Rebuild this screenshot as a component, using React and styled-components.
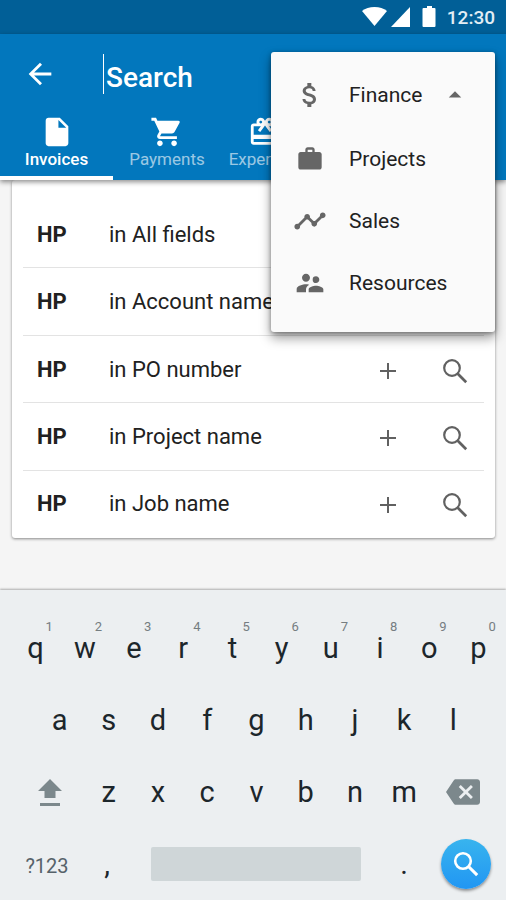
import React from "react";
import styled, { createGlobalStyle, css } from "styled-components";
import {
  MdArrowBack,
  MdArrowDropUp,
  MdAttachMoney,
  MdBackspace,
  MdCardGiftcard,
  MdInsertDriveFile,
  MdShoppingCart,
  MdSupervisorAccount,
  MdTimeline,
  MdWork,
} from "react-icons/md";

const GlobalStyle = createGlobalStyle`
  *, *::before, *::after { box-sizing: border-box; }
  body {
    margin: 0;
    background: #f5f5f5;
    font-family: Roboto, "Liberation Sans", sans-serif;
  }
  button, input { font: inherit; }
  svg { display: block; flex: none; }
`;

const plainButton = css`
  display: flex;
  align-items: center;
  justify-content: center;
  margin: 0;
  padding: 0;
  border: 0;
  background: none;
  color: inherit;
  cursor: pointer;
`;

const Screen = styled.div`
  position: relative;
  display: flex;
  flex-direction: column;
  min-height: 100vh;
  overflow: hidden;
`;

const StatusBar = styled.div`
  display: flex;
  align-items: center;
  justify-content: flex-end;
  height: 34px;
  padding-right: 11px;
  background: #015f97;
  color: #fff;
`;

const Clock = styled.time`
  margin-left: 11px;
  font-size: 19px;
  font-weight: 500;
  color: #e3eef5;
`;

const Header = styled.header`
  position: relative;
  z-index: 1;
  background: #0277bd;
  color: #fff;
  box-shadow: 0 2px 5px rgba(0, 0, 0, 0.45);
`;

const Toolbar = styled.div`
  display: flex;
  align-items: center;
  height: 80px;
  padding-left: 24px;
`;

const BackButton = styled.button`
  ${plainButton}
  width: 32px;
  height: 32px;
`;

const SearchField = styled.input`
  flex: 1;
  min-width: 0;
  height: 40px;
  margin-left: 47px;
  padding: 6px 0 0 2px;
  border: 0;
  border-left: 1px solid #fff;
  outline: 0;
  background: none;
  color: #fff;
  font-size: 28px;
  font-weight: 500;
  &::placeholder {
    color: #fff;
    opacity: 1;
  }
`;

const Tabs = styled.div`
  display: flex;
  height: 66px;
`;

const Tab = styled.button`
  ${plainButton}
  flex: none;
  flex-direction: column;
  justify-content: flex-start;
  width: ${(p) => p.$width}px;
  padding-top: 1px;
  border-bottom: 4px solid ${(p) => (p.$active ? "#fff" : "transparent")};
  font-size: 17px;
  font-weight: ${(p) => (p.$active ? 500 : 400)};
  line-height: 20px;
`;

const TabLabel = styled.span`
  opacity: ${(p) => (p.$active ? 1 : 0.6)};
`;

const Menu = styled.nav`
  position: absolute;
  z-index: 2;
  top: 52px;
  right: 11px;
  width: 224px;
  padding: 10px 0 18px;
  border-radius: 3px;
  background: #fafafa;
  box-shadow: 0 6px 12px rgba(0, 0, 0, 0.4), 0 1px 4px rgba(0, 0, 0, 0.35);
`;

const MenuItem = styled.button`
  ${plainButton}
  justify-content: flex-start;
  width: 100%;
  height: ${(p) => (p.$open ? 66 : 62)}px;
  padding-right: 25px;
  font-size: 21px;
  color: #212121;
  svg { color: #666; }
`;

const MenuIcon = styled.span`
  display: flex;
  justify-content: center;
  width: 78px;
`;

const MenuLabel = styled.span`
  flex: 1;
  text-align: left;
`;

const Results = styled.ul`
  display: flex;
  flex: 1;
  flex-direction: column;
  margin: 0 11px 52px 12px;
  padding: 21px 11px 0;
  border-radius: 3px;
  background: #fff;
  list-style: none;
  box-shadow: 0 1px 3px rgba(0, 0, 0, 0.45);
`;

const ResultRow = styled.li`
  display: flex;
  flex: 1;
  align-items: center;
  min-height: 56px;
  padding-left: 14px;
  border-bottom: 1px solid #e3e3e3;
  font-size: 22px;
  color: #212121;
  &:last-child { border-bottom-color: transparent; }
`;

const Query = styled.strong`
  width: 72px;
  font-weight: 700;
`;

const Scope = styled.span`
  flex: 1;
  white-space: nowrap;
`;

const RowAction = styled.button`
  ${plainButton}
  width: 76px;
  height: 48px;
  padding-top: 3px;
  color: #616161;
  &:last-child { width: 58px; }
`;

const Keyboard = styled.section`
  padding-top: 22px;
  background: #eceff1;
  color: #1c262b;
  box-shadow: 0 -1px 2px rgba(0, 0, 0, 0.3);
`;

const KeyRow = styled.div`
  display: flex;
  align-items: center;
  height: 72px;
  padding: 0 ${(p) => p.$right}px 0 ${(p) => p.$left}px;
`;

const Key = styled.button`
  ${plainButton}
  position: relative;
  flex: 1 1 0;
  min-width: 0;
  height: 56px;
  font-size: 29px;
`;

const KeyHint = styled.span`
  position: absolute;
  top: 0;
  left: calc(50% + 10px);
  font-size: 13px;
  line-height: 14px;
  color: #757d81;
`;

const ActionKey = styled.button`
  ${plainButton}
  flex: none;
  width: 69px;
  height: 56px;
  color: #7c888c;
`;

const SpaceKey = styled.button`
  ${plainButton}
  flex: 1;
  height: 34px;
  margin: 0 6px 0 20px;
  border-radius: 2px;
  background: #cfd6d8;
`;

const SideKey = styled(Key)`
  flex: none;
  width: ${(p) => p.$width}px;
`;

const SymbolsKey = styled(SideKey)`
  padding-top: 4px;
  font-size: 20px;
  color: #56626a;
`;

const SearchKey = styled.button`
  ${plainButton}
  width: 50px;
  height: 50px;
  border-radius: 50%;
  background: linear-gradient(#38b4ee, #2196f3);
  color: #fff;
  box-shadow: 0 2px 3px rgba(0, 0, 0, 0.4);
`;

const tabs = [
  { label: "Invoices", icon: MdInsertDriveFile, width: 113, active: true },
  { label: "Payments", icon: MdShoppingCart, width: 108 },
  { label: "Expenses", icon: MdCardGiftcard, width: 88 },
];

const menuItems = [
  { label: "Finance", icon: MdAttachMoney, size: 32, open: true },
  { label: "Projects", icon: MdWork, size: 28 },
  { label: "Sales", icon: MdTimeline, size: 34 },
  { label: "Resources", icon: MdSupervisorAccount, size: 32 },
];

const scopes = ["All fields", "Account name", "PO number", "Project name", "Job name"];

function StatusIcons() {
  return (
    <svg width="74" height="22" viewBox="0 0 74 22" fill="currentColor" aria-hidden="true">
      <path d="M0 5Q5 1 12.500 1T25 5L12.500 20z" />
      <path d="M48 1v20H29z" />
      <path d="M63 2h2V0h5v2h2.500q1 0 1 1v17q0 1-1 1H61.500q-1 0-1-1V3q0-1 1-1z" />
    </svg>
  );
}

function PlusIcon() {
  return (
    <svg width="18" height="18" viewBox="0 0 18 18" stroke="currentColor" strokeWidth="2" aria-hidden="true">
      <path d="M9 1v16M1 9h16" />
    </svg>
  );
}

function SearchIcon({ weight = 2.2 }) {
  return (
    <svg width="26" height="26" viewBox="0 0 26 26" fill="none" stroke="currentColor" strokeWidth={weight} aria-hidden="true">
      <circle cx="10" cy="10" r="7.800" />
      <path d="M15.500 15.500L24.200 24.200" strokeWidth={weight + 0.5} />
    </svg>
  );
}

function ShiftIcon() {
  return (
    <svg width="26" height="30" viewBox="0 0 26 30" fill="currentColor" aria-hidden="true">
      <path d="M13 2L1 14h6.500v7h11v-7H25zM3 26h20v3H3z" />
    </svg>
  );
}

export default function App() {
  return (
    <>
      <GlobalStyle />
      <Screen>
        <StatusBar>
          <StatusIcons />
          <Clock>12:30</Clock>
        </StatusBar>

        <Header>
          <Toolbar>
            <BackButton aria-label="Back">
              <MdArrowBack size={34} />
            </BackButton>
            <SearchField type="text" placeholder="Search" aria-label="Search" />
          </Toolbar>
          <Tabs role="tablist">
            {tabs.map(({ label, icon: Icon, width, active }) => (
              <Tab key={label} role="tab" aria-selected={!!active} $width={width} $active={active}>
                <Icon size={34} />
                <TabLabel $active={active}>{label}</TabLabel>
              </Tab>
            ))}
          </Tabs>
        </Header>

        <Menu aria-label="Sections">
          {menuItems.map(({ label, icon: Icon, size, open }) => (
            <MenuItem key={label} $open={open}>
              <MenuIcon>
                <Icon size={size} />
              </MenuIcon>
              <MenuLabel>{label}</MenuLabel>
              {open && <MdArrowDropUp size={30} />}
            </MenuItem>
          ))}
        </Menu>

        <Results>
          {scopes.map((scope) => (
            <ResultRow key={scope}>
              <Query>HP</Query>
              <Scope>in {scope}</Scope>
              <RowAction aria-label={`Add ${scope}`}>
                <PlusIcon />
              </RowAction>
              <RowAction aria-label={`Search ${scope}`}>
                <SearchIcon />
              </RowAction>
            </ResultRow>
          ))}
        </Results>

        <Keyboard aria-label="Keyboard">
          <KeyRow $left={11} $right={3}>
            {[..."qwertyuiop"].map((letter, i) => (
              <Key key={letter}>
                {letter}
                <KeyHint>{(i + 1) % 10}</KeyHint>
              </Key>
            ))}
          </KeyRow>
          <KeyRow $left={35} $right={28}>
            {[..."asdfghjkl"].map((letter) => (
              <Key key={letter}>{letter}</Key>
            ))}
          </KeyRow>
          <KeyRow $left={15} $right={8}>
            <ActionKey aria-label="Shift">
              <ShiftIcon />
            </ActionKey>
            {[..."zxcvbnm"].map((letter) => (
              <Key key={letter}>{letter}</Key>
            ))}
            <ActionKey aria-label="Backspace">
              <MdBackspace size={34} />
            </ActionKey>
          </KeyRow>
          <KeyRow $left={11} $right={15}>
            <SymbolsKey $width={72}>?123</SymbolsKey>
            <SideKey $width={48}>,</SideKey>
            <SpaceKey aria-label="Space" />
            <SideKey $width={74}>.</SideKey>
            <SearchKey aria-label="Search">
              <SearchIcon weight={2.6} />
            </SearchKey>
          </KeyRow>
        </Keyboard>
      </Screen>
    </>
  );
}
